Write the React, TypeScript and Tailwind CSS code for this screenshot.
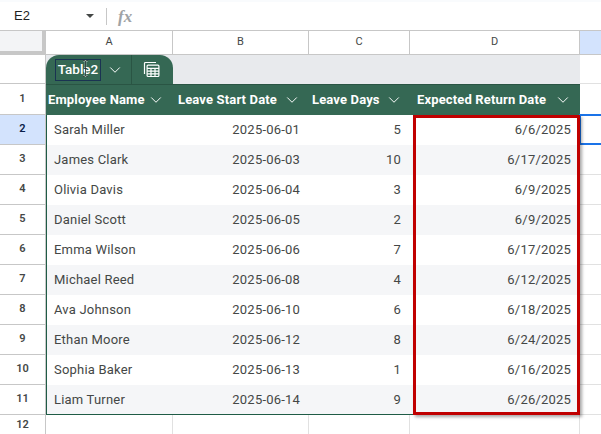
import React from "react";
import { ChevronDown } from "lucide-react";

const rows = [
  ["Sarah Miller", "2025-06-01", "5", "6/6/2025"],
  ["James Clark", "2025-06-03", "10", "6/17/2025"],
  ["Olivia Davis", "2025-06-04", "3", "6/9/2025"],
  ["Daniel Scott", "2025-06-05", "2", "6/9/2025"],
  ["Emma Wilson", "2025-06-06", "7", "6/17/2025"],
  ["Michael Reed", "2025-06-08", "4", "6/12/2025"],
  ["Ava Johnson", "2025-06-10", "6", "6/18/2025"],
  ["Ethan Moore", "2025-06-12", "8", "6/24/2025"],
  ["Sophia Baker", "2025-06-13", "1", "6/16/2025"],
  ["Liam Turner", "2025-06-14", "9", "6/26/2025"],
];

const headers = [
  { label: "Employee Name", w: "w-[127px]", pad: "pl-[2px] pr-[8px]" },
  { label: "Leave Start Date", w: "w-[136px]", pad: "pl-[5px] pr-[8px]" },
  { label: "Leave Days", w: "w-[101px]", pad: "pl-[3px] pr-[7px]" },
  { label: "Expected Return Date", w: "w-[170px]", pad: "pl-[7px] pr-[8px]" },
];

const RowNum = ({ n, active }: { n: number; active?: boolean }) => (
  <div
    className={`w-[46px] shrink-0 flex items-center justify-center border-r border-b border-[#c7c7c7] text-[11px] font-semibold ${
      active ? "bg-[#d3e3fd] text-[#0b1f4b] font-bold" : "bg-white text-[#444746]"
    }`}
  >
    {n}
  </div>
);

export default function App() {
  return (
    <div className="w-[601px] h-[434px] overflow-hidden bg-white font-['Roboto',sans-serif] text-[#444746]">
      {/* formula bar */}
      <div className="h-[31px] flex items-center bg-white border-t-2 border-t-[#f9fbfd] border-b border-[#c7c7c7]">
        <span className="w-[86px] pl-[14px] text-[13px] text-[#1f1f1f] font-['Liberation_Sans',sans-serif]">E2</span>
        <span className="w-0 h-0 border-x-[4px] border-x-transparent border-t-[4px] border-t-[#444746]" />
        <span className="ml-[12px] w-px h-[17px] bg-[#c7c7c7]" />
        <span className="ml-[11px] text-[17px] leading-none italic font-semibold font-['Liberation_Serif',serif] text-[#a0a3a6]">fx</span>
      </div>

      {/* column headers */}
      <div className="h-[24px] flex border-b border-[#c7c7c7] text-[11px] text-[#444746]">
        <div className="w-[46px] shrink-0 bg-[#f3f4f6] border-r-[4px] border-b-[3px] border-[#c7c7c7]" />
        <div className="w-[127px] flex items-center justify-center border-r border-[#c7c7c7]">A</div>
        <div className="w-[136px] flex items-center justify-center border-r border-[#c7c7c7]">B</div>
        <div className="w-[101px] flex items-center justify-center border-r border-[#c7c7c7]">C</div>
        <div className="w-[170px] flex items-center justify-center border-r border-[#c7c7c7]">D</div>
        <div className="flex-1 bg-[#d3e3fd]" />
      </div>

      {/* table name row */}
      <div className="h-[29px] flex">
        <div className="w-[46px] shrink-0 bg-white border-r border-b border-[#c7c7c7]" />
        <div className="w-[534px] bg-[#e8eaed]">
          <div className="relative w-[127px] h-[29px] flex items-center rounded-t-[13px] bg-[#356854] text-white">
            <span className="ml-[9px] h-[22px] w-[46px] flex items-center justify-center border border-[#1a3352] text-[13.5px] font-medium">
              Table2
            </span>
            <ChevronDown className="ml-[5px] size-[18px]" strokeWidth={1.3} />
            <span className="ml-[7px] w-px h-[29px] bg-[#2a5544]" />
            <svg className="ml-[11px]" width="17" height="17" viewBox="0 0 17 17" fill="none" stroke="currentColor" strokeWidth="1.2">
              <path d="M1.5 13V2.5a1 1 0 0 1 1-1H13" />
              <rect x="4.1" y="4.1" width="11.8" height="11.4" rx="1" />
              <path d="M4.1 7.4h11.8M4.1 10.2h11.8M4.1 12.9h11.8M8 7.4v8.1M12 7.4v8.1" />
            </svg>
            {/* mouse cursor over the name */}
            <svg className="absolute left-[36px] top-[5px]" width="7" height="17" viewBox="0 0 7 17" fill="none">
              <path d="M1 .5h1.5l1 1 1-1H6M3.5 1.5v14M1 16.5h1.5l1-1 1 1H6M2 8.5h3" stroke="#ffffff" strokeWidth="1.8" opacity="0.5" />
              <path d="M1 .5h1.5l1 1 1-1H6M3.5 1.5v14M1 16.5h1.5l1-1 1 1H6M2 8.5h3" stroke="#1f2a2a" strokeWidth="0.8" />
            </svg>
          </div>
        </div>
        <div className="flex-1 bg-white border-b border-[#e1e1e1]" />
      </div>

      {/* table */}
      <div className="relative">
        <div className="h-[31px] flex">
          <RowNum n={1} />
          {headers.map((h) => (
            <div
              key={h.label}
              className={`${h.w} ${h.pad} flex items-center justify-between bg-[#356854] border-t border-[#2a5544] text-white text-[13px] tracking-[0.15px] font-bold whitespace-nowrap`}
            >
              {h.label}
              <ChevronDown className="size-[18px] shrink-0" strokeWidth={1.3} />
            </div>
          ))}
          <div className="flex-1 border-b border-[#e1e1e1]" />
        </div>

        {rows.map((r, i) => (
          <div key={r[0]} className="h-[30px] flex text-[13px]">
            <RowNum n={i + 2} active={i === 0} />
            <div
              className={`w-[534px] flex tracking-[0.2px] ${i % 2 ? "bg-[#f5f6f8]" : "bg-white"} border-l border-[#1f5c46] border-r ${
                i === 9 ? "border-b" : ""
              }`}
            >
              <div className="w-[126px] flex items-center pl-[7px]">{r[0]}</div>
              <div className="w-[136px] flex items-center justify-end pr-[9px]">{r[1]}</div>
              <div className="w-[101px] flex items-center justify-end pr-[9px]">{r[2]}</div>
              <div className="flex-1 flex items-center justify-end pr-[8px]">{r[3]}</div>
            </div>
            <div className={`flex-1 ${i === 0 ? "" : "border-b border-[#e1e1e1]"}`} />
          </div>
        ))}

        <div className="h-[20px] flex">
          <div className="w-[46px] shrink-0 flex items-center justify-center border-r border-[#c7c7c7] text-[11px] font-semibold">12</div>
          <div className="w-[127px] border-r border-[#e1e1e1]" />
          <div className="w-[136px] border-r border-[#e1e1e1]" />
          <div className="w-[101px] border-r border-[#e1e1e1]" />
          <div className="w-[170px] border-r border-[#e1e1e1]" />
        </div>

        {/* selected cell E2, runs off the right edge */}
        <div className="absolute left-[579px] top-[30px] w-[30px] h-[31px] border-2 border-[#1a73e8] pointer-events-none" />
        {/* red highlight around the return dates */}
        <div className="absolute left-[413px] top-[31px] w-[167px] h-[300px] border-[3px] border-[#c00000] shadow-[2px_2px_3px_rgba(0,0,0,0.35)] pointer-events-none" />
      </div>
    </div>
  );
}
